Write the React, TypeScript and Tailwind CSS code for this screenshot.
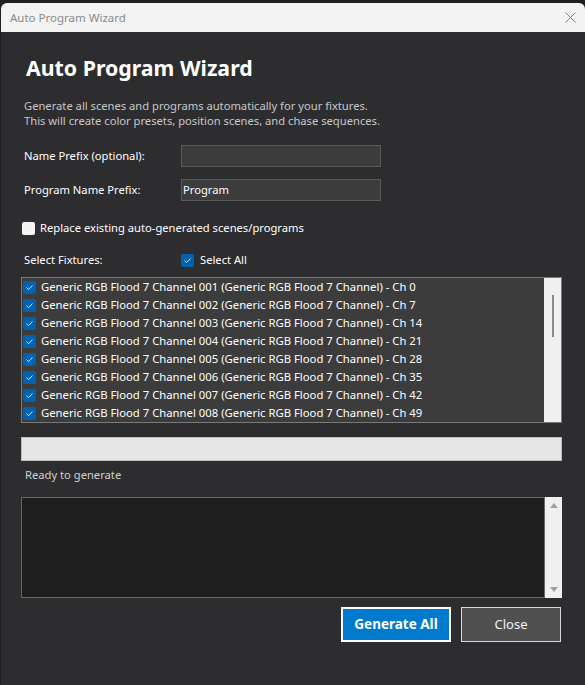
import React from "react";

const font = { fontFamily: '"Noto Sans", "Open Sans", sans-serif' };

function Check({ checked }: { checked: boolean }) {
  if (checked) {
    return (
      <span className="w-[13px] h-[13px] rounded-[2px] bg-[#0063b1] flex items-center justify-center shrink-0">
        <svg width="9" height="9" viewBox="0 0 9 9">
          <path d="M1.5 4.7 L3.6 6.6 L7.5 2.5" stroke="#cfe3f5" strokeWidth="1" fill="none" />
        </svg>
      </span>
    );
  }
  return <span className="w-[13px] h-[13px] rounded-[2px] bg-[#f4f4f4] shrink-0" />;
}

const chs = [0, 7, 14, 21, 28, 35, 42, 49];

export default function App() {
  return (
    <div className="w-[585px] h-[685px] bg-[#202020] pt-[3px] pl-[1px] overflow-hidden" style={font}>
      <div className="w-[584px] h-[682px] bg-[#2d2d30] rounded-tl-[6px] rounded-tr-[6px] overflow-hidden flex flex-col">
        <div className="h-[29px] bg-[#f3f3f3] flex items-center justify-between pl-[9px] pr-[9px] shrink-0">
          <span className="text-[11.5px] text-[#8a8a8a]">Auto Program Wizard</span>
          <svg width="11" height="11" viewBox="0 0 11 11">
            <path d="M0.5 0.5 L10.5 10.5 M10.5 0.5 L0.5 10.5" stroke="#808080" strokeWidth="1" />
          </svg>
        </div>
        <div className="flex flex-col pl-[19px] pr-[23px]">
          <h1 className="text-[21.3px] font-bold text-white leading-[28px] mt-[22px] pl-[6px]">Auto Program Wizard</h1>
          <div className="text-[11.2px] text-[#c8c8c8] leading-[15px] mt-[16px] pl-[4px]">
            <div>Generate all scenes and programs automatically for your fixtures.</div>
            <div>This will create color presets, position scenes, and chase sequences.</div>
          </div>
          <div className="flex items-center mt-[17px] h-[22px]">
            <span className="w-[161px] pl-[4px] text-[11.2px] text-white">Name Prefix (optional):</span>
            <div className="w-[200px] h-[22px] bg-[#3c3c3c] border border-[#5a5a5a]" />
          </div>
          <div className="flex items-center mt-[12px] h-[22px]">
            <span className="w-[161px] pl-[4px] text-[11.2px] text-white">Program Name Prefix:</span>
            <div className="w-[200px] h-[22px] bg-[#3c3c3c] border border-[#5a5a5a] text-[11.2px] text-white pl-[1px] leading-[19px]">Program</div>
          </div>
          <div className="flex items-center gap-[5px] mt-[20px] h-[14px] pl-[2px]">
            <Check checked={false} />
            <span className="text-[11.2px] text-white">Replace existing auto-generated scenes/programs</span>
          </div>
          <div className="flex items-center mt-[18px] h-[14px]">
            <span className="w-[161px] pl-[4px] text-[11.2px] text-white">Select Fixtures:</span>
            <Check checked={true} />
            <span className="text-[11.2px] text-white ml-[6px]">Select All</span>
          </div>
          <div className="flex mt-[10px] ml-[1px] h-[146px] w-[541px] border border-[#7a7a7a] bg-[#3c3c3c]">
            <div className="flex-1 flex flex-col pl-[1px]">
              {chs.map((c, i) => (
                <div key={i} className="h-[18px] flex items-center gap-[5px]">
                  <Check checked={true} />
                  <span className="text-[11.3px] text-white whitespace-nowrap">
                    Generic RGB Flood 7 Channel 00{i + 1} (Generic RGB Flood 7 Channel) - Ch {c}
                  </span>
                </div>
              ))}
            </div>
            <div className="w-[17px] bg-[#f0f0f0] flex justify-center pt-[17px]">
              <div className="w-[2px] h-[42px] bg-[#8a8a8a]" />
            </div>
          </div>
          <div className="mt-[14px] ml-[1px] w-[541px] h-[24px] bg-[#e6e6e6] border border-[#bcbcbc]" />
          <div className="mt-[6px] pl-[5px] text-[11.2px] text-[#d0d0d0] leading-[16px]">Ready to generate</div>
          <div className="flex mt-[14px] ml-[1px] w-[541px] h-[101px]">
            <div className="flex-1 bg-[#1e1e1e] border border-[#686868]" />
            <div className="w-[17px] bg-[#f0f0f0] flex flex-col items-center justify-between py-[5px]">
              <svg width="8" height="6" viewBox="0 0 8 6"><path d="M0 6 L4 1 L8 6 Z" fill="#a0a0a0" /></svg>
              <svg width="8" height="6" viewBox="0 0 8 6"><path d="M0 0 L4 5 L8 0 Z" fill="#a0a0a0" /></svg>
            </div>
          </div>
          <div className="flex justify-end gap-[10px] mt-[9px] w-[541px]">
            <button className="w-[110px] h-[35px] bg-[#007acc] border-2 border-white text-white font-bold text-[13.5px]">Generate All</button>
            <button className="w-[100px] h-[35px] bg-[#505050] border border-[#d8d8d8] text-[#f0f0f0] text-[13px]">Close</button>
          </div>
        </div>
      </div>
    </div>
  );
}
